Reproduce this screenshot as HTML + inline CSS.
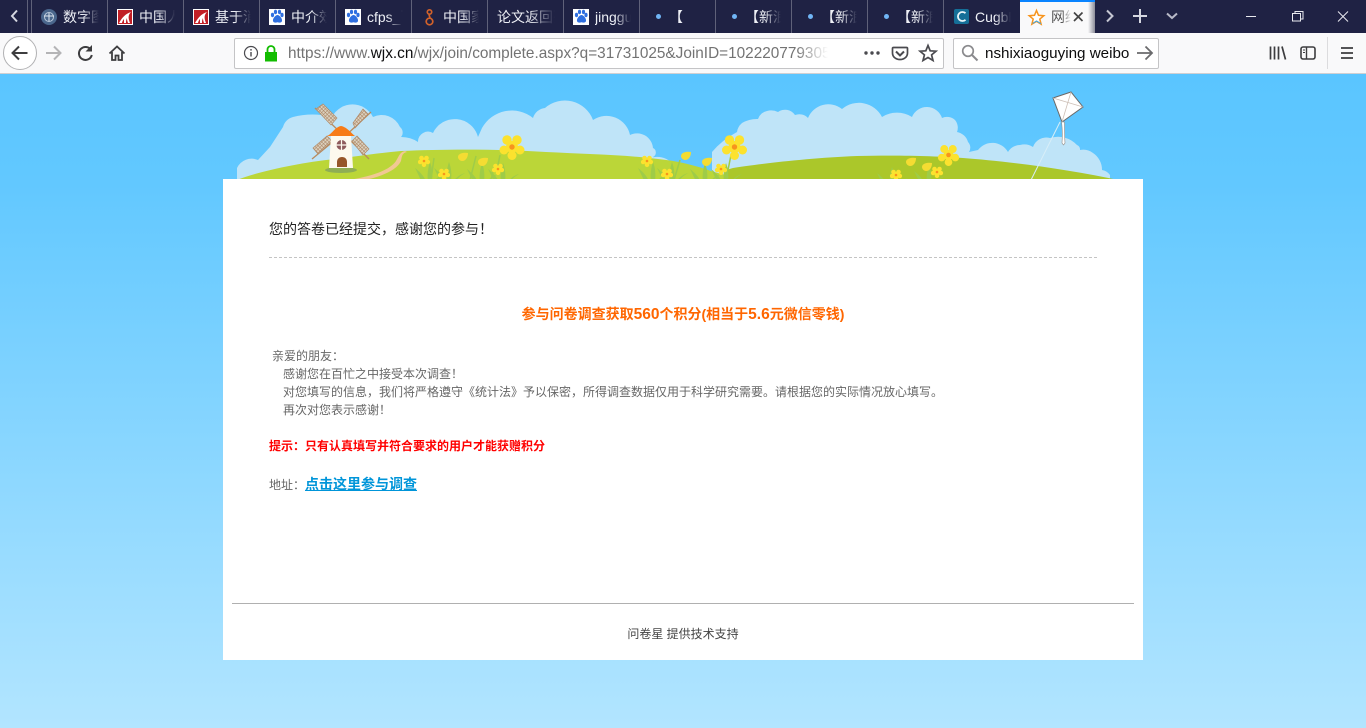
<!DOCTYPE html>
<html lang="zh"><head><meta charset="utf-8"><title>问卷星</title>
<style>
html,body{margin:0;padding:0}
body{width:1366px;height:728px;overflow:hidden;position:relative;font-family:"Liberation Sans","Noto Sans CJK SC",sans-serif;background:#fff}
.a{position:absolute;white-space:nowrap}
#bar{left:0;top:0;width:1366px;height:33px;background:#1f2244}
.sep{position:absolute;top:0;width:1px;height:33px;background:#5f6179}
.t{position:absolute;top:8px;font-size:14px;line-height:18px;color:#eef0f6;overflow:hidden;white-space:nowrap;-webkit-mask-image:linear-gradient(90deg,#000 55%,transparent);mask-image:linear-gradient(90deg,#000 55%,transparent)}
.dot{position:absolute;top:14px;width:5px;height:5px;border-radius:50%;background:#70b5f5}
#tool{left:0;top:33px;width:1366px;height:40px;background:#f9f9fa;border-bottom:1px solid #cfcfd2}
#page{left:0;top:74px;width:1366px;height:654px;background:linear-gradient(#5ac5ff 0,#62c8ff 110px,#b2e5ff 654px)}
#box{left:223px;top:179px;width:920px;height:481px;background:#fff}
.c{font-size:12px;line-height:18px;color:#666}
</style></head><body>
<div class="a" id="bar">
<div class="sep" style="left:27px"></div><div class="sep" style="left:31px"></div><div class="sep" style="left:107px"></div><div class="sep" style="left:183px"></div><div class="sep" style="left:259px"></div><div class="sep" style="left:335px"></div><div class="sep" style="left:411px"></div><div class="sep" style="left:487px"></div><div class="sep" style="left:563px"></div><div class="sep" style="left:639px"></div><div class="sep" style="left:715px"></div><div class="sep" style="left:791px"></div><div class="sep" style="left:867px"></div><div class="sep" style="left:943px"></div>
<div class="t" style="left:63px;width:36px">数字图书馆</div>
<div class="t" style="left:139px;width:36px">中国人民大学</div>
<div class="t" style="left:215px;width:36px">基于消费者</div>
<div class="t" style="left:291px;width:36px">中介效应</div>
<div class="t" style="left:367px;width:36px">cfps_百度</div>
<div class="t" style="left:443px;width:36px">中国家庭</div>
<div class="t" style="left:497px;width:58px">论文返回列表</div>
<div class="t" style="left:595px;width:36px">jinggu</div>
<div class="dot" style="left:656px"></div><div class="t" style="left:669px;width:36px;-webkit-mask-image:none;mask-image:none">【</div>
<div class="dot" style="left:732px"></div><div class="t" style="left:745px;width:36px">【新浪微博</div>
<div class="dot" style="left:808px"></div><div class="t" style="left:821px;width:36px">【新浪微博</div>
<div class="dot" style="left:884px"></div><div class="t" style="left:897px;width:36px">【新浪微博</div>
<div class="t" style="left:975px;width:36px">Cugbbs</div>
<div style="position:absolute;left:1020px;top:0;width:75px;height:33px;background:#f9f9fa;border-top:2px solid #0a84ff;box-sizing:border-box"></div>
<div style="position:absolute;left:1088px;top:2px;width:7px;height:31px;background:linear-gradient(90deg,#f9f9fa,#8b8c98)"></div>
<div class="t" style="left:1051px;width:20px;color:#555">网络</div>
<svg class="a" style="left:0;top:0" width="1366" height="33" viewBox="0 0 1366 33">
<path d="M17 10.500l-5 5.500 5 5.500" fill="none" stroke="#d5d7e0" stroke-width="2"/>
<circle cx="49" cy="17" r="8" fill="#4a668c"/><circle cx="49" cy="17" r="4.500" fill="none" stroke="#b9c7da"/><path d="M44 16h10M49 13v8" stroke="#dfe6ef"/>
<g id="cn"><rect x="117" y="9" width="16" height="16" fill="#fff"/><rect x="118" y="10" width="14" height="14" fill="#c11f26"/><path d="M119 23c3-5 6-9 12-11-3 3-3 6-1 11h-2c-1-3-1-4-1-5-1 2-1 3-1 5h-2c0-2 0-3 0-4-1 1-2 3-2 4z" fill="#fff"/></g>
<use href="#cn" x="76"/>
<g id="bd"><rect x="269" y="9" width="16" height="16" fill="#fff"/><g fill="#2f6fe0"><ellipse cx="272.500" cy="15" rx="1.600" ry="2.200"/><ellipse cx="275.500" cy="12" rx="1.600" ry="2.200"/><ellipse cx="279.500" cy="12" rx="1.600" ry="2.200"/><ellipse cx="282" cy="15" rx="1.600" ry="2.200"/><path d="M277.500 15c2 0 5 3.500 4.500 6-.4 1.800-2.500 1.800-4.500 1.300-2 .5-4.100.5-4.500-1.300-.5-2.500 2.500-6 4.500-6z"/></g></g>
<use href="#bd" x="76"/><use href="#bd" x="304"/>
<g fill="none" stroke="#d2622a" stroke-width="1.700"><circle cx="429.500" cy="12" r="2.200"/><circle cx="429.500" cy="21.500" r="3.300"/><path d="M429 14.500l1 3.500"/></g>
<rect x="954" y="9" width="15" height="15" rx="2" fill="#156f98"/><path d="M965.500 13.200a4.500 4.500 0 1 0 0 6.600" fill="none" stroke="#e9f4f9" stroke-width="1.800"/>
<path d="M1036.500 10.500l2 4.800 5.300.4-4 3.400 1.300 5.100-4.600-2.800-4.600 2.800 1.300-5.100-4-3.400 5.300-.4z" fill="#fff" stroke="#f7941d" stroke-width="1.500"/><path d="M1032.500 23.500l4-2.500 4.500 2.700" fill="none" stroke="#3ba6e8"/>
<path d="M1074 12.500l8.500 8.500M1082.500 12.500l-8.500 8.500" stroke="#444" stroke-width="1.700"/>
<path d="M1107 10.500l5.500 5.500-5.500 5.500" fill="none" stroke="#c5c7d2" stroke-width="2"/>
<path d="M1140 9v14M1133 16h14" stroke="#d5d7e0" stroke-width="2"/>
<path d="M1167 13.500l5 4.500 5-4.500" fill="none" stroke="#b8bac8" stroke-width="2"/>
<path d="M1246 16.500h10" stroke="#e8e9ef"/>
<path d="M1292.500 13.500h8v7.500h-8zM1295 13.500v-2h8v7.500h-2.500" fill="none" stroke="#e8e9ef"/>
<path d="M1338 11.500l10 10M1348 11.500l-10 10" stroke="#e8e9ef"/>
</svg>
</div>

<div class="a" id="tool">
<div class="a" style="left:234px;top:5px;width:708px;height:29px;background:#fff;border:1px solid #c4c4c6;border-radius:2px"></div>
<div class="a" style="left:953px;top:5px;width:204px;height:29px;background:#fff;border:1px solid #c4c4c6;border-radius:2px"></div>
<div class="a" style="left:288px;top:11px;width:540px;height:20px;overflow:hidden;font-size:15.350px;line-height:20px;color:#737373;-webkit-mask-image:linear-gradient(90deg,#000 94%,transparent);mask-image:linear-gradient(90deg,#000 94%,transparent)">https://www.<span style="color:#0c0c0d">wjx.cn</span>/wjx/join/complete.aspx?q=31731025&amp;JoinID=102220779305849</div>
<div class="a" style="left:985px;top:11px;font-size:15.200px;line-height:20px;color:#0c0c0d">nshixiaoguying weibo</div>
<svg class="a" style="left:0;top:0" width="1366" height="40" viewBox="0 0 1366 40">
<circle cx="20" cy="20" r="16.500" fill="#fff" stroke="#b1b1b3"/>
<path d="M27.500 20h-14.500M19 13.500l-6.500 6.500 6.500 6.500" fill="none" stroke="#3d3d3f" stroke-width="2"/>
<path d="M46 20h14M54 13.500l6.500 6.500-6.500 6.500" fill="none" stroke="#b4b4b6" stroke-width="2"/>
<path d="M91 17a6.500 6.500 0 1 0 .8 5" fill="none" stroke="#3d3d3f" stroke-width="2"/><path d="M92 12v6.500h-6.500z" fill="#3d3d3f"/>
<path d="M109.500 20.500l7.500-7 7.500 7M112 19v8h3.500v-4.500h3V27h3.500v-8" fill="none" stroke="#3d3d3f" stroke-width="1.800"/>
<circle cx="251" cy="20" r="6.500" fill="none" stroke="#4a4a4f" stroke-width="1.200"/><path d="M251 19v4.500M251 16v1.600" stroke="#4a4a4f" stroke-width="1.400"/>
<rect x="265" y="19" width="12" height="9.500" fill="#12bc00"/><path d="M267.500 19.500v-3a3.500 3.500 0 0 1 7 0v3" fill="none" stroke="#12bc00" stroke-width="1.800"/>
<g fill="#4a4a4f"><circle cx="866" cy="20" r="1.700"/><circle cx="872" cy="20" r="1.700"/><circle cx="878" cy="20" r="1.700"/></g>
<path d="M893.500 14.500h13a1 1 0 0 1 1 1v4.500c0 4-3.500 6.500-7.500 6.500s-7.500-2.500-7.500-6.500v-4.500a1 1 0 0 1 1-1z" fill="none" stroke="#4a4a4f" stroke-width="1.700"/><path d="M896 18.500l4 4 4-4" fill="none" stroke="#4a4a4f" stroke-width="2"/>
<path d="M928 12.500l2.200 5.300 5.800.4-4.400 3.700 1.400 5.600-5-3-5 3 1.400-5.600-4.400-3.700 5.800-.4z" fill="none" stroke="#4a4a4f" stroke-width="1.700"/>
<circle cx="968" cy="18" r="5.300" fill="none" stroke="#8a8a8d" stroke-width="1.700"/><path d="M972 22l5.500 5.500" stroke="#8a8a8d" stroke-width="2"/>
<path d="M1137 20h14M1145.500 13.500l6.500 6.500-6.500 6.500" fill="none" stroke="#6a6a6c" stroke-width="1.800"/>
<path d="M1270.500 13.500v13M1274.500 13.500v13M1278.500 13.500v13M1282 13.500l3.500 13" fill="none" stroke="#3d3d3f" stroke-width="1.700"/>
<rect x="1301" y="14" width="14" height="12" rx="2" fill="none" stroke="#3d3d3f" stroke-width="1.600"/><path d="M1306.500 14v12" stroke="#3d3d3f" stroke-width="1.400"/><path d="M1303 17h2M1303 19.500h2" stroke="#3d3d3f"/>
<path d="M1327.500 4v32" stroke="#dcdcde"/>
<path d="M1341 15h12M1341 20h12M1341 25h12" stroke="#3d3d3f" stroke-width="1.700"/>
</svg>
</div>

<div class="a" id="page"></div>
<svg class="a" style="left:0;top:74px" width="1366" height="110" viewBox="0 74 1366 110">
<defs>
<pattern id="lat" width="2.600" height="2.600" patternUnits="userSpaceOnUse" patternTransform="rotate(45)"><rect width="2.600" height="2.600" fill="#dcd2bf"/><path d="M0 0h2.600M0 0v2.600" stroke="#a8805f" stroke-width="1"/></pattern>
<g id="f"><circle r="6" fill="#fce22e"/><g fill="#fce22e"><circle cx="-5" cy="-7" r="4.700"/><circle cx="5" cy="-7" r="4.700"/><circle cx="-8" cy="3" r="4.500"/><circle cx="8" cy="3" r="4.500"/><circle cx="0" cy="8.500" r="4.500"/></g><circle r="2.700" fill="#f7941d"/></g>
<g id="s"><circle r="3" fill="#fce22e"/><g fill="#fce22e"><circle cx="-2.500" cy="-3" r="2.300"/><circle cx="2.500" cy="-3" r="2.300"/><circle cx="-3.800" cy="1" r="2.300"/><circle cx="3.800" cy="1" r="2.300"/><circle cx="0" cy="3.800" r="2.300"/></g><circle r="1.300" fill="#f7941d"/></g>
<g id="b"><path d="M-5 1c0-3 4-5 10-4 0 4-2 8-6 8-2 0-4-2-4-4z" fill="#f5dc32"/></g>
<g id="g1" fill="#9fcc48"><path d="M0 26c-3-6-6-9-11-13 3 6 5 10 6 13zM6 26c1-7 0-14-2-19-2 6-3 13-2 19zM8 26c4-4 8-7 12-8-5 3-7 5-9 8z"/></g>
</defs>
<path fill="#bfe4f8" d="M237 180V168A16 16 0 0 1 258 160L270 147L283 127A14 14 0 0 1 293 117A80 80 0 0 1 332 117A23 23 0 0 1 373 117A20 20 0 0 1 400 127A7 7 0 0 1 401 137A30 30 0 0 1 418 142A10 10 0 0 1 433 133A24 24 0 0 1 478 137L482 128A34 34 0 0 1 533 118A14 14 0 0 1 545 108A30 30 0 0 1 593 120A24 24 0 0 1 630 135A16 16 0 0 1 653 148A5 5 0 0 1 653 157L653 180Z"/>
<path fill="#bfe4f8" d="M650 158Q664 154 674 165L654 167z"/>
<path fill="#bfe4f8" d="M712 180V152Q722 140 737 132A14 14 0 0 1 742 123A30 30 0 0 1 758 119A12 12 0 0 1 767 111A16 16 0 0 1 778 112A12 12 0 0 1 795 115A12 12 0 0 1 808 118A22 22 0 0 1 842 109A26 26 0 0 1 882 117A28 28 0 0 1 912 117A16 16 0 0 1 942 118A12 12 0 0 1 955 120A12 12 0 0 1 957 132A14 14 0 0 1 968 142A8 8 0 0 1 969 152L978 150A18 18 0 0 1 1008 152A14 14 0 0 1 1020 145A16 16 0 0 1 1033 147A14 14 0 0 1 1050 138A26 26 0 0 1 1077 145A5 5 0 0 1 1080 150A16 16 0 0 1 1093 153A20 20 0 0 1 1102 170A12 12 0 0 1 1110 175L1110 180Z"/>
<path fill="#bbd638" d="M237 180c20-8 60-17 98-21 24-3 44-6 66-8 45-2 100-2 145 1 40 2 82 3 112 7 20 2 36 6 56 13l32 8z"/>
<path fill="#abc72a" d="M726 180v-10l7-2c25-4 75-10 124-12 40-1 80 0 106 2 40 3 100 10 160 23z"/>
<path fill="#f1c893" d="M349 180c22-4 40-9 47-19 3-5 4-9 9-10l2 1c-5 1-5 4-6 9-4 9-20 16-37 19z"/>
<g>
<path d="M431 180l3-22M470 180l6-24M491 180l4-16" stroke="#9fcc48" stroke-width="1.500"/>
<use href="#g1" x="426" y="155"/><use href="#g1" x="445" y="155"/><use href="#g1" x="478" y="156"/><use href="#g1" x="499" y="156"/>
<use href="#g1" x="649" y="155"/><use href="#g1" x="668" y="155"/><use href="#g1" x="701" y="156"/><use href="#g1" x="722" y="156"/>
<path d="M731 155l-3 15M680 160l-6 20M500 155l-3 15" stroke="#9fcc48" stroke-width="1.500"/>
<use href="#g1" x="888" y="160"/><use href="#g1" x="925" y="158"/>
</g>
<use href="#f" x="512" y="147"/><use href="#f" x="734.500" y="147"/><use href="#f" transform="translate(948.500 155) scale(.85)"/>
<use href="#s" x="424" y="161"/><use href="#s" x="444" y="174"/><use href="#s" x="498" y="169"/><use href="#s" x="647" y="161"/><use href="#s" x="667" y="174"/><use href="#s" x="721" y="169"/><use href="#s" x="896" y="175"/><use href="#s" x="937" y="172"/>
<use href="#b" x="463" y="156"/><use href="#b" x="483" y="161"/><use href="#b" x="686" y="155"/><use href="#b" x="707" y="161"/><use href="#b" x="911" y="161"/><use href="#b" x="927" y="166"/>
<!-- windmill -->
<g>
<ellipse cx="341" cy="170" rx="16" ry="3" fill="#8fae54"/>
<path d="M315 108l27 26M371 112l-29 27M341 135l-29 24M345 135l24 24" stroke="#b98b5e" stroke-width="1.300" fill="none"/>
<g fill="url(#lat)" stroke="#b08a68" stroke-width=".7"><path d="M316 109l7-5 14 14-6 7z"/><path d="M353 123l10-14 5 5-13 14z"/><path d="M313 148l14-12 5 5-14 13z"/><path d="M352 141l5-5 12 13-6 6z"/></g>
<path d="M331 136h20l2 32h-24z" fill="#fdf9ee"/>
<path d="M327 136c5-2 8-9 14-10 6 1 10 7 14 10z" fill="#f77b18"/>
<circle cx="341.500" cy="145" r="5" fill="#8d5a5c"/><path d="M336 145h11M341.500 139.500v11" stroke="#fdf9ee" stroke-width="1.200"/>
<path d="M337 167v-5c0-3 2-5 5-5s5 2 5 5v5z" fill="#96562a"/>
</g>
<!-- kite -->
<path d="M1060 122l-29 58" stroke="#d8eef8" stroke-width="1" fill="none"/>
<path d="M1053 98l18-6 12 15-21 15z" fill="#fff" stroke="#6b6866" stroke-width="1"/>
<path d="M1053 98l30 9M1071 92l-9 30" stroke="#cdbfb6" stroke-width=".8"/>
<path d="M1061.500 122c1 7 1 14 .5 21l1.500 2 1.500-2c-.5-7-.5-14-.5-21z" fill="#fff" stroke="#8f8a86" stroke-width=".6"/>
</svg>

<div class="a" id="box"></div>
<div class="a" style="left:269px;top:219px;font-size:14px;line-height:20px;color:#222">您的答卷已经提交，感谢您的参与！</div>
<div class="a" style="left:269px;top:257px;width:828px;height:0;border-top:1px dashed #c4c4c4"></div>
<div class="a" style="left:223px;top:304px;width:920px;text-align:center;font-size:14px;font-weight:bold;line-height:20px;color:#ff6600">参与问卷调查获取<span style="font-size:15.500px">560</span>个积分(相当于<span style="font-size:15.500px">5.6</span>元微信零钱)</div>
<div class="a c" style="left:272px;top:347px">亲爱的朋友：</div>
<div class="a c" style="left:283px;top:365px">感谢您在百忙之中接受本次调查！</div>
<div class="a c" style="left:283px;top:383px">对您填写的信息，我们将严格遵守《统计法》予以保密，所得调查数据仅用于科学研究需要。请根据您的实际情况放心填写。</div>
<div class="a c" style="left:283px;top:401px">再次对您表示感谢！</div>
<div class="a c" style="left:269px;top:437px;color:#ff0000;font-weight:bold">提示：只有认真填写并符合要求的用户才能获赠积分</div>
<div class="a c" style="left:269px;top:476px">地址：</div>
<div class="a" style="left:305px;top:474px;font-size:14px;line-height:20px;font-weight:bold;color:#0095d9;text-decoration:underline">点击这里参与调查</div>
<div class="a" style="left:232px;top:603px;width:902px;height:1px;background:#b0b0b0"></div>
<div class="a" style="left:223px;top:625px;width:920px;text-align:center;font-size:12px;line-height:18px;color:#444">问卷星 提供技术支持</div>
</body></html>
